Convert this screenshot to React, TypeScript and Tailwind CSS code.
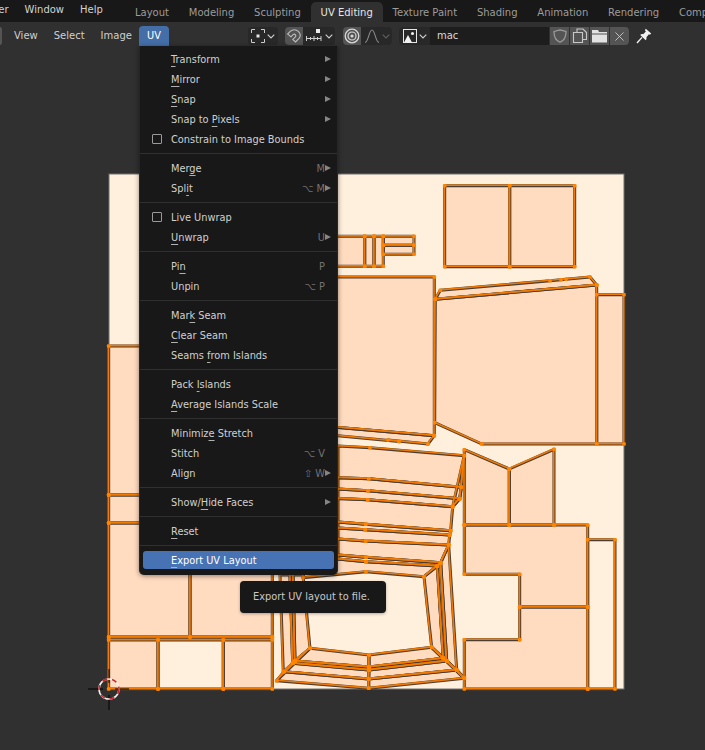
import React from 'react';

type Pt = [number, number];

const tabs = ['Layout', 'Modeling', 'Sculpting', 'UV Editing', 'Texture Paint', 'Shading', 'Animation', 'Rendering', 'Compositing'];

type Row = { label: string; ul?: number; key?: string; arrow?: boolean; check?: boolean; active?: boolean };

const menuGroups: Row[][] = [
  [
    { label: 'Transform', ul: 0, arrow: true },
    { label: 'Mirror', ul: 0, arrow: true },
    { label: 'Snap', ul: 0, arrow: true },
    { label: 'Snap to Pixels', ul: 8, arrow: true },
    { label: 'Constrain to Image Bounds', check: true },
  ],
  [
    { label: 'Merge', ul: 3, key: 'M', arrow: true },
    { label: 'Split', ul: 3, key: '⌥ M', arrow: true },
  ],
  [
    { label: 'Live Unwrap', check: true },
    { label: 'Unwrap', ul: 0, key: 'U', arrow: true },
  ],
  [
    { label: 'Pin', ul: 2, key: 'P' },
    { label: 'Unpin', key: '⌥ P' },
  ],
  [
    { label: 'Mark Seam', ul: 3 },
    { label: 'Clear Seam', ul: 0 },
    { label: 'Seams from Islands', ul: 6 },
  ],
  [
    { label: 'Pack Islands', ul: 5 },
    { label: 'Average Islands Scale', ul: 0 },
  ],
  [
    { label: 'Minimize Stretch', ul: 7 },
    { label: 'Stitch', key: '⌥ V' },
    { label: 'Align', key: '⇧ W', arrow: true },
  ],
  [{ label: 'Show/Hide Faces', ul: 5, arrow: true }],
  [{ label: 'Reset', ul: 0 }],
  [{ label: 'Export UV Layout', ul: 0, active: true }],
];

// peach islands of the UV map, in page coordinates
const islands: Pt[][] = [
  [[444.7, 185.7], [509.7, 185.7], [509.7, 266.7], [444.7, 266.7]],
  [[509.7, 185.7], [574.7, 185.7], [574.7, 266.7], [509.7, 266.7]],
  [[330, 236.3], [364.7, 236.3], [364.7, 266.3], [330, 266.3]],
  [[364.7, 236.3], [374, 236.3], [374, 266.3], [364.7, 266.3]],
  [[374, 236.3], [383.3, 236.3], [383.3, 266.3], [374, 266.3]],
  [[383.3, 236.3], [414, 236.3], [414, 245.3], [383.3, 245.3]],
  [[383.3, 245.3], [414, 245.3], [414, 254.3], [383.3, 254.3]],
  [[330, 277], [434.3, 277], [434.3, 435.7], [330, 426.7]],
  [[330, 426.7], [434.3, 435.7], [428, 444], [388, 440], [399, 441.6], [330, 435]],
  [[435.3, 299.3], [596.7, 285], [596.7, 444], [481.7, 444], [434.7, 422.7]],
  [[435.3, 299.3], [440.3, 290.3], [550, 280.7], [561, 279.7], [566, 279.3], [590, 277], [596.7, 285]],
  [[596.7, 294.7], [624, 294.7], [624, 444], [596.7, 444]],
  [[464.3, 449.7], [509.3, 469], [509.3, 525], [464.3, 525]],
  [[509.3, 469], [554, 449.3], [554, 525], [509.3, 525]],
  [[464.3, 525], [509.3, 525], [554, 525], [587.7, 525], [587.7, 607], [519.7, 607], [519.7, 574.3], [464.3, 574.3]],
  [[519.7, 607], [587.7, 607], [587.7, 689], [464.3, 689], [464.3, 639.7], [519.7, 639.7]],
  // central mesh
  [[338, 446], [370, 447.7], [464.3, 455.7], [461.3, 487.3], [368.7, 478.7], [338, 477.7]],
  [[338, 477.7], [368.7, 478.7], [461.3, 487.3], [459.7, 498.7], [368, 490.7], [338, 489]],
  [[338, 489], [368, 490.7], [459.7, 498.7], [452.7, 506.7], [367.7, 499.7], [338, 498.5]],
  [[338, 498.5], [367.7, 499.7], [452.7, 506.7], [450.7, 530.7], [365.7, 524.3], [338, 522]],
  [[338, 522], [365.7, 524.3], [450.7, 530.7], [449.7, 535], [365.3, 529.7], [338, 528]],
  [[338, 528], [365.3, 529.7], [449.7, 535], [448.7, 545], [365.7, 541], [338, 539]],
  [[338, 539], [365.7, 541], [448.7, 545], [440.7, 562.7], [366, 557.3], [338, 555]],
  [[338, 555], [366, 557.3], [440.7, 562.7], [437.3, 566], [366, 561.7], [338, 559]],
  [[338, 559], [366, 561.7], [437.3, 566], [424, 576.7], [366, 571.7], [303, 577.7], [303, 560]],
  [[424, 576.7], [437.3, 566], [443.3, 658.3], [431.7, 647.3]],
  [[437.3, 566], [440.7, 562.7], [446.7, 661], [443.3, 658.3]],
  [[440.7, 562.7], [448.7, 545], [456.7, 670], [446.7, 661]],
  [[369, 655], [431.7, 647.3], [443.3, 658.3], [369, 667]],
  [[369, 667], [443.3, 658.3], [446.7, 661], [369, 670]],
  [[369, 670], [446.7, 661], [456.7, 670], [368.7, 679]],
  [[368.7, 679], [456.7, 670], [464.3, 678.3], [368.7, 688.3]],
  [[369, 655], [310, 648.3], [295, 661], [369, 667]],
  [[369, 667], [295, 661], [292.7, 663.3], [369, 670]],
  [[369, 670], [292.7, 663.3], [284, 671.7], [368.7, 679]],
  [[368.7, 679], [284, 671.7], [276.7, 680.7], [368.7, 688.3]],
  [[303, 575], [310, 648.3], [295, 661], [293, 575]],
  [[293, 575], [295, 661], [292.7, 663.3], [290, 575]],
  [[290, 575], [292.7, 663.3], [283.3, 672], [280, 575]],
  // left column
  [[108.7, 346], [150, 346], [150, 495], [108.7, 495]],
  [[108.7, 495], [150, 495], [150, 523], [108.7, 523]],
  [[108.7, 523], [190, 523], [190, 637], [108.7, 637]],
  [[190, 523], [272.3, 523], [272.3, 637], [190, 637]],
  [[108.7, 640], [158, 640], [158, 689], [108.7, 689]],
  [[223.3, 640], [272.3, 640], [272.3, 689], [223.3, 689]],
];

// outlines without a fill of their own
const outlines: Pt[][] = [
  [[587.7, 539.7], [615, 539.7], [615, 689], [587.7, 689]],
  [[158, 640], [223.3, 640], [223.3, 689], [158, 689]],
  [[108.7, 637.3], [272.3, 637.3]],
  [[431.7, 647.3], [464.3, 678.3]],
  [[276.7, 680.7], [310, 648.3]],
  [[464.3, 455.7], [461.3, 487.3], [459.7, 498.7], [452.7, 506.7]],
  [[446.7, 661], [456.7, 670], [464.3, 678.3]],
];

const toPoints = (p: Pt[]) => p.map(([x, y]) => `${x},${y}`).join(' ');

const isVisibleVert = ([x, y]: Pt) => !(x === 330 || x === 338 || x === 150 || (x === 303 && y !== 577.7) || y === 575);

function UvMap() {
  const all = [...islands, ...outlines];
  return (
    <svg viewBox="0 46 705 704" className="block w-[705px] h-[704px]">
      <rect x="109" y="174" width="515" height="515" fill="#ffefdd" stroke="#707070" />
      {islands.map((p, i) => (
        <polygon key={i} points={toPoints(p)} fill="#ffdbbf" />
      ))}
      {all.map((p, i) => (
        <polygon key={i} points={toPoints(p)} fill="none" stroke="#4a3d32" strokeWidth="3" strokeLinejoin="round" />
      ))}
      {all.map((p, i) => (
        <polygon key={i} points={toPoints(p)} fill="none" stroke="#f27a00" strokeWidth="1.6" strokeLinejoin="round" transform="translate(-0.3 -0.4)" />
      ))}
      {all.flatMap((p, i) =>
        p.filter(isVisibleVert).map(([x, y], j) => (
          <rect key={`${i}-${j}`} x={x - 1.8} y={y - 1.8} width="3.6" height="3.6" rx="1" fill="#ff8500" />
        ))
      )}
      <path d="M88 689h15M115 689h14M109 669v14M109 695v15" stroke="#000" strokeWidth="1" />
      <circle cx="109" cy="689" r="10" fill="none" stroke="#f4f0ee" strokeWidth="1.6" />
      <circle cx="109" cy="689" r="10" fill="none" stroke="#c8242c" strokeWidth="1.6" strokeDasharray="5 5" />
    </svg>
  );
}

function Arrow() {
  return (
    <svg viewBox="0 0 6 6" className="w-[6px] h-[6px]">
      <polygon points="0,0 6,3 0,6" fill="#858585" />
    </svg>
  );
}

function Label({ label, ul }: { label: string; ul?: number }) {
  if (ul === undefined) return <span className="mt-[2px]">{label}</span>;
  return (
    <span className="mt-[2px]">
      {label.slice(0, ul)}
      <span className="underline underline-offset-[3px] decoration-[#b0b0b0]">{label[ul]}</span>
      {label.slice(ul + 1)}
    </span>
  );
}

function MenuRow({ row }: { row: Row }) {
  return (
    <div className="h-5 py-px">
      <div className={`h-[18px] flex items-center rounded-[3px] pr-[3px] ${row.active ? 'bg-[#4772b3] text-white' : 'text-[#d0d0d0]'}`}>
        <div className="w-[28px] flex justify-center">
          {row.check && <div className="w-[10px] h-[10px] border border-[#9a9a9a] rounded-[1px]" />}
        </div>
        <Label label={row.label} ul={row.ul} />
        <div className="ml-auto flex items-center text-[#737373]">
          {row.key && <span className={`mt-[2px] ${row.arrow ? '' : 'mr-[6px]'}`}>{row.key}</span>}
          {row.arrow && <Arrow />}
        </div>
      </div>
    </div>
  );
}

function UvMenu() {
  return (
    <div className="absolute left-[139px] top-0 w-[199px] bg-[#181818] rounded-b-[5px] pt-[3px] pb-[5px] px-[3px] shadow-[0_1px_5px_rgba(0,0,0,0.45)] border-x border-[#262626]">
      {menuGroups.map((group, i) => (
        <div key={i}>
          {i > 0 && (
            <div className="h-[9px] flex items-center -mx-[3px]">
              <div className="h-px w-full bg-[#303030]" />
            </div>
          )}
          {group.map((row) => (
            <MenuRow key={row.label} row={row} />
          ))}
        </div>
      ))}
    </div>
  );
}

function Chevron({ dim }: { dim?: boolean }) {
  return (
    <svg viewBox="0 0 8 5" className="w-2 h-[5px]">
      <path d="M0.7 0.7L4 4L7.3 0.7" fill="none" stroke={dim ? '#5f5f5f' : '#d0d0d0'} strokeWidth="1.1" />
    </svg>
  );
}

function PivotIcon() {
  return (
    <svg viewBox="0 0 14 14" className="w-[14px] h-[14px]">
      <path d="M0.5 4V0.5H4M10 0.5H13.5V4M13.5 10V13.5H10M4 13.5H0.5V10" fill="none" stroke="#cfcfcf" />
      <rect x="5.5" y="5.5" width="3" height="3" fill="#e8e8e8" />
    </svg>
  );
}

function MagnetIcon() {
  return (
    <svg viewBox="0 0 16 16" className="w-4 h-4">
      <path d="M9.5 14L13 10.5C14.5 8.5 14.5 5.5 12.3 3.4C10 1.2 6.5 1.2 4.2 3.4L1.6 6L5 8.8L7 6.6C8 6 9 6.2 9.5 7C10 7.8 9.8 8.5 9.2 9.1L6.8 11.4Z" fill="none" stroke="#bdbdbd" strokeWidth="1.1" />
    </svg>
  );
}

function SnapIcon() {
  return (
    <svg viewBox="0 0 16 14" className="w-4 h-[14px]">
      <rect x="10" y="0" width="4" height="4" fill="#ededed" />
      <path d="M0.5 7v5M4.5 8v3M8 7v5M11.5 8v3M15 7v5M0.5 9.5H15" stroke="#cfcfcf" fill="none" />
    </svg>
  );
}

function ProportionalIcon() {
  return (
    <svg viewBox="0 0 16 16" className="w-4 h-4">
      <circle cx="8" cy="8" r="6.8" fill="none" stroke="#d8d8d8" strokeWidth="1.3" />
      <circle cx="8" cy="8" r="4" fill="none" stroke="#d8d8d8" strokeWidth="1.2" />
      <circle cx="8" cy="8" r="1.6" fill="#d8d8d8" />
    </svg>
  );
}

function CurveIcon() {
  return (
    <svg viewBox="0 0 16 14" className="w-4 h-[14px]">
      <path d="M1 13.5C4.5 13 5 1 8 1C11 1 11.5 13 15 13.5" fill="none" stroke="#8a8a8a" strokeWidth="1.1" />
    </svg>
  );
}

function ImageIcon() {
  return (
    <svg viewBox="0 0 14 14" className="w-[14px] h-[14px]">
      <rect x="0.5" y="0.5" width="13" height="13" fill="none" stroke="#e8e8e8" />
      <path d="M1 13.5L5 6L9 13.5Z" fill="#f2f2f2" />
      <circle cx="9.5" cy="4.5" r="1.5" fill="#f2f2f2" />
    </svg>
  );
}

function ShieldIcon() {
  return (
    <svg viewBox="0 0 14 14" className="w-[14px] h-[14px]">
      <path d="M1 2.5L7 0.8L13 2.5C13.2 8 11 11.5 7 13.3C3 11.5 0.8 8 1 2.5Z" fill="none" stroke="#9e9e9e" strokeWidth="1.2" />
    </svg>
  );
}

function CopyIcon() {
  return (
    <svg viewBox="0 0 16 16" className="w-4 h-4">
      <path d="M5 4.5V1H11L14.5 4.5V11.5H10.5M1.5 4.5H10.5V14.5H1.5Z" fill="none" stroke="#c8c8c8" strokeWidth="1.1" />
    </svg>
  );
}

function FolderIcon() {
  return (
    <svg viewBox="0 0 16 14" className="w-4 h-[14px]">
      <path d="M0 1H6L7 3H15V4.5H0Z" fill="#e2e2e2" />
      <rect x="0" y="5.5" width="15" height="8" fill="#e2e2e2" />
    </svg>
  );
}

function CloseIcon() {
  return (
    <svg viewBox="0 0 10 10" className="w-[9px] h-[9px]">
      <path d="M0.5 0.5L9.5 9.5M9.5 0.5L0.5 9.5" stroke="#c8c8c8" fill="none" />
    </svg>
  );
}

function PinIcon() {
  return (
    <svg viewBox="0 0 16 16" className="w-4 h-4">
      <path d="M9.8 0.8L15.2 5.6L13.9 6.8L12.9 6.2L10.4 9.2C10.8 10.4 10.5 11.4 9.7 12.2L4.2 7C5 6.2 6 5.9 7.2 6.3L9.9 3.4L8.9 2.2Z" fill="#f2f2f2" />
      <path d="M6 9.4L1 15" stroke="#f2f2f2" strokeWidth="1.4" />
    </svg>
  );
}

export default function App() {
  return (
    <div className="w-[705px] h-[750px] overflow-hidden bg-[#303030] font-['DejaVu_Sans',sans-serif] text-[9.8px] leading-none">
      {/* top bar */}
      <div className="h-[22px] bg-[#181818] flex items-start overflow-hidden whitespace-nowrap">
        <div className="flex text-[#d2d2d2] -ml-[27px] w-[152px] shrink-0 pt-[5px] gap-[16px] text-[10px]">
          <span>Render</span>
          <span>Window</span>
          <span>Help</span>
        </div>
        <div className="flex pt-[2px] text-[10px]">
          {tabs.map((t) => (
            <div
              key={t}
              className={`h-5 pl-[10px] pr-[9.8px] pt-[6px] rounded-t-[5px] ${t === 'UV Editing' ? 'bg-[#303030] text-[#e6e6e6]' : 'text-[#9c9c9c]'}`}
            >
              {t}
            </div>
          ))}
        </div>
      </div>

      {/* header of the UV editor */}
      <div className="h-6 flex items-center whitespace-nowrap relative">
        <div className="w-[2px] h-[18px] bg-[#545454] rounded-r-[3px] mt-[4px]" />
        <div className="w-[137px] shrink-0 flex items-center gap-[16px] pl-3 text-[#cfcfcf] text-[10px] mt-[4px]">
          <span>View</span>
          <span>Select</span>
          <span>Image</span>
        </div>
        <div className="mt-[4px] w-[30px] h-5 rounded-t-[4px] bg-[#446ea8] text-white flex items-center justify-center">
          UV
        </div>
        <div className="ml-[79px] mt-[4px] w-[30px] h-[18px] rounded-[4px] bg-[#282828] flex items-center justify-center gap-[2px]">
          <PivotIcon />
          <Chevron />
        </div>
        <div className="ml-[7px] mt-[4px] flex h-[18px] rounded-[4px] bg-[#282828] overflow-hidden">
          <div className="w-[18px] bg-[#545454] flex items-center justify-center">
            <MagnetIcon />
          </div>
          <div className="w-[32px] flex items-center justify-center gap-[3px]">
            <SnapIcon />
            <Chevron />
          </div>
        </div>
        <div className="ml-[8px] mt-[4px] flex h-[18px] rounded-[4px] bg-[#282828] overflow-hidden">
          <div className="w-[18px] bg-[#545454] flex items-center justify-center">
            <ProportionalIcon />
          </div>
          <div className="w-[31px] flex items-center justify-center gap-[2px]">
            <CurveIcon />
            <Chevron dim />
          </div>
        </div>
        <div className="ml-[7px] mt-[4px] flex h-[18px] rounded-[4px] overflow-hidden bg-[#282828]">
          <div className="w-[31px] flex items-center justify-center gap-[2px]">
            <ImageIcon />
            <Chevron />
          </div>
          <div className="w-[119px] bg-[#1d1d1d] text-[#d8d8d8] pl-[7px] flex items-center text-[10px]">mac</div>
          <div className="w-5 bg-[#545454] flex items-center justify-center border-l border-[#303030]">
            <ShieldIcon />
          </div>
          <div className="w-5 bg-[#545454] flex items-center justify-center border-l border-[#303030]">
            <CopyIcon />
          </div>
          <div className="w-5 bg-[#545454] flex items-center justify-center border-l border-[#303030]">
            <FolderIcon />
          </div>
          <div className="w-5 bg-[#545454] flex items-center justify-center border-l border-[#303030]">
            <CloseIcon />
          </div>
        </div>
        <div className="ml-[7px] mt-[4px]">
          <PinIcon />
        </div>
      </div>

      {/* image area */}
      <div className="relative">
        <UvMap />
        <UvMenu />
        <div className="absolute left-[240px] top-[535px] w-[146px] h-8 rounded-[4px] bg-[#181818] text-[#c8c8c8] flex items-center pl-[13px] whitespace-nowrap shadow-[0_1px_3px_rgba(0,0,0,0.3)]">
          Export UV layout to file.
        </div>
      </div>
    </div>
  );
}
